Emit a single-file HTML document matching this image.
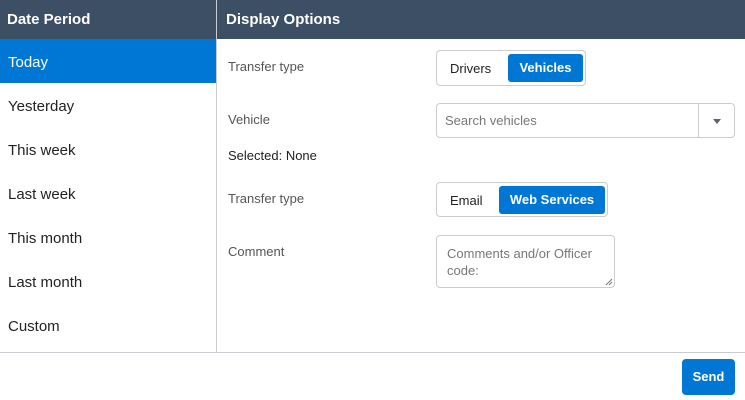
<!DOCTYPE html>
<html><head><style>
*{box-sizing:border-box;margin:0;padding:0}
body{width:745px;height:400px;background:#fff;font-family:"Liberation Sans",Arial,sans-serif;position:relative;overflow:hidden;color:#222}
.abs{position:absolute}
.hdr{top:0;height:39px;background:#3d4f64;color:#fff;font-weight:bold;font-size:15px;line-height:40px}
.item{left:0;width:216px;height:44px;line-height:47px;padding-left:8px;font-size:15px;color:#222}
.lbl{font-size:13px;color:#555}
.grp{border:1px solid #ccc;border-radius:4px;background:#fff}
.btn{position:absolute;background:#0077d4;color:#fff;font-size:13px;font-weight:bold;border-radius:3px;text-align:center}
.opt{position:absolute;font-size:13px;color:#222}
</style></head><body>
<div class="abs hdr" style="left:0;width:216px;padding-left:7px">Date Period</div>
<div class="abs hdr" style="left:217px;width:528px;padding-left:9px">Display Options</div>
<div class="abs" style="left:216px;top:0;width:1px;height:352px;background:#c8ccd0"></div>
<div class="abs item" style="top:39px;background:#0077d4;color:#fff">Today</div>
<div class="abs item" style="top:83px">Yesterday</div>
<div class="abs item" style="top:127px">This week</div>
<div class="abs item" style="top:171px">Last week</div>
<div class="abs item" style="top:215px">This month</div>
<div class="abs item" style="top:259px">Last month</div>
<div class="abs item" style="top:303px">Custom</div>
<div class="abs" style="left:0;top:352px;width:745px;height:1px;background:#c8ccd0"></div>

<div class="abs lbl" style="left:228px;top:59px">Transfer type</div>
<div class="abs grp" style="left:436px;top:50px;width:150px;height:36px">
<span class="opt" style="left:13px;top:10px">Drivers</span>
<div class="btn" style="left:71px;top:3px;width:75px;height:28px;line-height:28px">Vehicles</div></div>

<div class="abs lbl" style="left:228px;top:112px">Vehicle</div>
<div class="abs grp" style="left:436px;top:103px;width:299px;height:35px">
<span class="abs" style="left:8px;top:9px;font-size:13px;color:#777">Search vehicles</span>
<div class="abs" style="left:261px;top:0;width:1px;height:33px;background:#ccc"></div>
<div class="abs" style="left:276px;top:15px;width:0;height:0;border-left:4px solid transparent;border-right:4px solid transparent;border-top:5px solid #5a6470"></div>
</div>
<div class="abs" style="left:228px;top:148px;font-size:13px;color:#222">Selected: None</div>

<div class="abs lbl" style="left:228px;top:191px">Transfer type</div>
<div class="abs grp" style="left:436px;top:182px;width:172px;height:35px">
<span class="opt" style="left:13px;top:10px">Email</span>
<div class="btn" style="left:62px;top:3px;width:106px;height:28px;line-height:28px">Web Services</div></div>

<div class="abs lbl" style="left:228px;top:244px">Comment</div>
<div class="abs grp" style="left:436px;top:235px;width:179px;height:53px">
<div class="abs" style="left:10px;top:9px;font-size:13px;color:#777;line-height:17px;width:160px">Comments and/or Officer code:</div>
<svg class="abs" style="left:168px;top:42px" width="8" height="8"><path d="M1 7L7 1M4 7L7 4" stroke="#777" stroke-width="1"/></svg>
</div>

<div class="btn" style="left:682px;top:359px;width:53px;height:36px;line-height:36px;border-radius:4px">Send</div>
</body></html>
